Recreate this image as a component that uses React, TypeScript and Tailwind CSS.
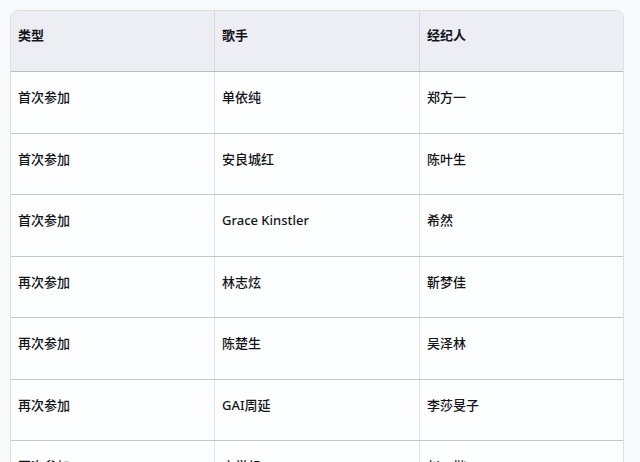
const rows = [
  ["首次参加", "单依纯", "郑方一"],
  ["首次参加", "安良城红", "陈叶生"],
  ["首次参加", "Grace Kinstler", "希然"],
  ["再次参加", "林志炫", "靳梦佳"],
  ["再次参加", "陈楚生", "吴泽林"],
  ["再次参加", "GAI周延", "李莎旻子"],
  ["再次参加", "宁学组", "赵一楷"],
];

export default function App() {
  return (
    <div
      className="h-[462px] w-[640px] overflow-hidden bg-[#f8f9fb] pl-[10px] pt-[10px]"
      style={{ fontFamily: '"Noto Sans", "Noto Sans CJK SC", sans-serif' }}
    >
      <div className="w-[614px] overflow-hidden rounded-[8px] border border-[#dcdfe4] bg-[#fdfeff] text-[13px] text-[#141418]">
        <div className="grid h-[61px] grid-cols-[204px_205px_1fr] border-b border-[#b9bdc4] bg-[#eceef4] font-bold">
          <div className="border-r border-[#d6d9df] px-[7px] pt-[15px]">类型</div>
          <div className="border-r border-[#d6d9df] px-[7px] pt-[15px]">歌手</div>
          <div className="px-[7px] pt-[15px]">经纪人</div>
        </div>
        {rows.map((r, i) => (
          <div
            key={i}
            className="grid h-[61.5px] grid-cols-[204px_205px_1fr] border-b border-[#c4c8ce] font-medium"
          >
            <div className="border-r border-[#dfe2e7] px-[7px] pt-[16px]">{r[0]}</div>
            <div className="border-r border-[#dfe2e7] px-[7px] pt-[16px]">{r[1]}</div>
            <div className="px-[7px] pt-[16px]">{r[2]}</div>
          </div>
        ))}
      </div>
    </div>
  );
}
